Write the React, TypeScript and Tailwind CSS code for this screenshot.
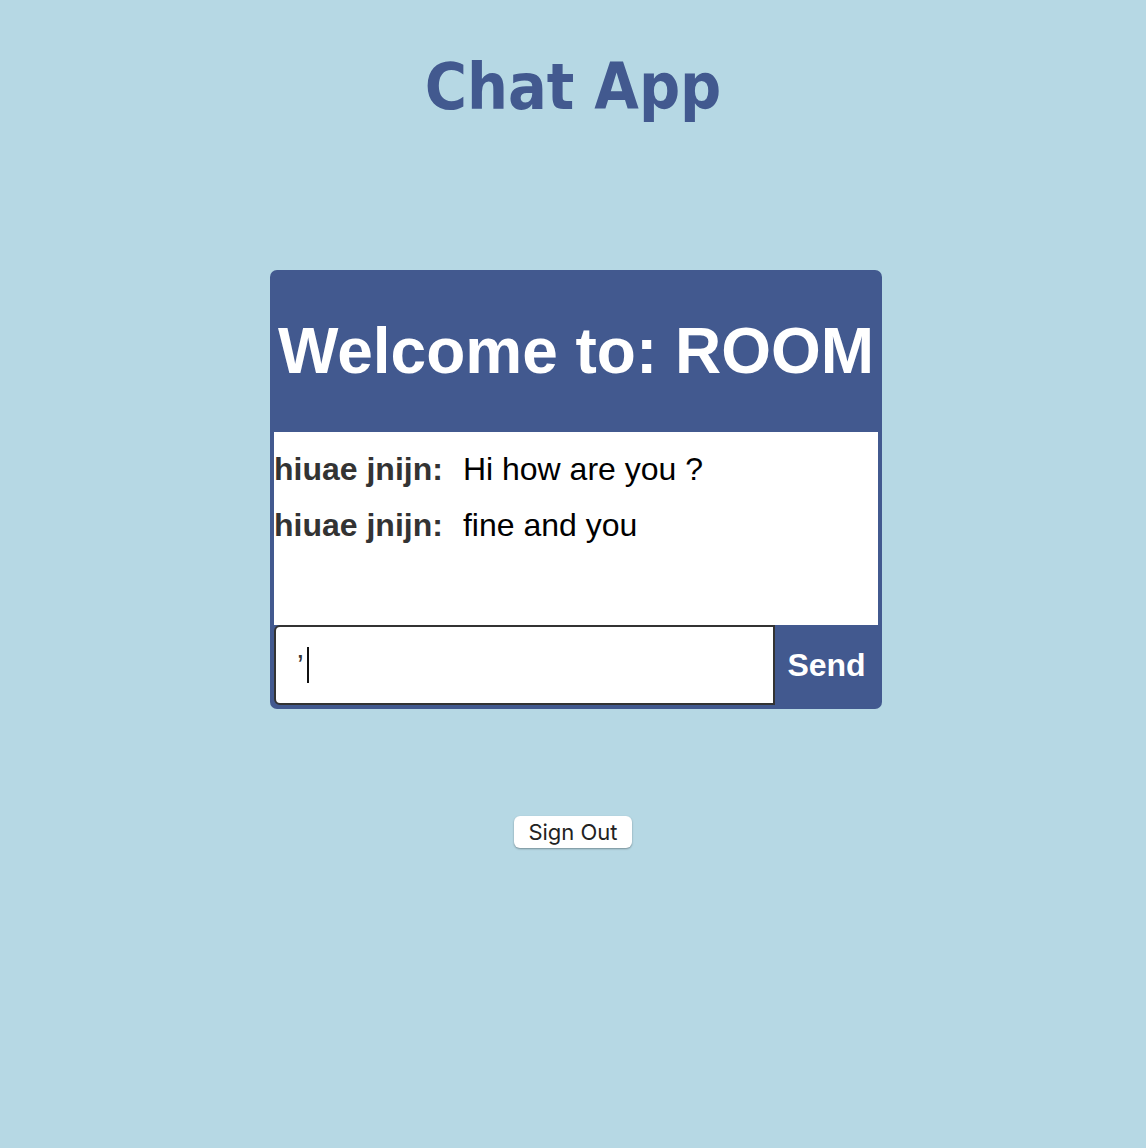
import React from "react";

export default function App() {
  return (
    <div className="min-h-[1148px] w-full bg-[#b6d8e4] flex flex-col items-center">
      <h1
        className="mt-[44px] h-[86px] flex items-center text-[64px] font-bold text-[#42598f] leading-none"
        style={{ fontFamily: '"DejaVu Sans Condensed", "DejaVu Sans", Verdana, sans-serif', fontStretch: "condensed" }}
      >
        Chat App
      </h1>
      <div className="mt-[140px] ml-[6px] w-[612px] rounded-[7px] bg-[#42598f] p-[4px] pt-0 flex flex-col">
        <div
          className="h-[162px] flex items-center justify-center text-white font-bold text-[64px] leading-none whitespace-nowrap"
          style={{ fontFamily: '"Liberation Sans", Arial, sans-serif' }}
        >
          Welcome to: ROOM
        </div>
        <div
          className="bg-white h-[193px] flex flex-col pt-[19px] gap-[20px] text-[32px] leading-[36px]"
          style={{ fontFamily: '"Liberation Sans", Arial, sans-serif' }}
        >
          <div className="flex whitespace-nowrap">
            <span className="font-bold text-[#333333]">hiuae jnijn:</span>
            <span className="ml-[20px] text-black">Hi how are you ?</span>
          </div>
          <div className="flex whitespace-nowrap">
            <span className="font-bold text-[#333333]">hiuae jnijn:</span>
            <span className="ml-[20px] text-black">fine and you</span>
          </div>
        </div>
        <div className="flex h-[80px] mr-[-4px]">
          <div className="w-[501px] h-[80px] border-2 border-[#333333] rounded-l-[6px] bg-white flex items-center pl-[21px]">
            <span
              className="text-[30px] text-[#333] leading-none"
              style={{ fontFamily: '"Liberation Sans", Arial, sans-serif' }}
            >
              ’
            </span>
            <span className="ml-[3px] w-[2px] h-[36px] bg-[#111]" />
          </div>
          <div
            className="flex-1 flex items-center justify-center pr-[4px] text-white font-bold text-[32px]"
            style={{ fontFamily: '"Liberation Sans", Arial, sans-serif' }}
          >
            Send
          </div>
        </div>
      </div>
      <button
        className="mt-[107px] w-[118px] h-[32px] bg-white rounded-[6px] shadow-[0_1px_2px_rgba(0,0,0,0.35)] text-[22px] text-[#222] flex items-center justify-center"
        style={{ fontFamily: 'Inter, "Open Sans", sans-serif' }}
      >
        Sign Out
      </button>
    </div>
  );
}
